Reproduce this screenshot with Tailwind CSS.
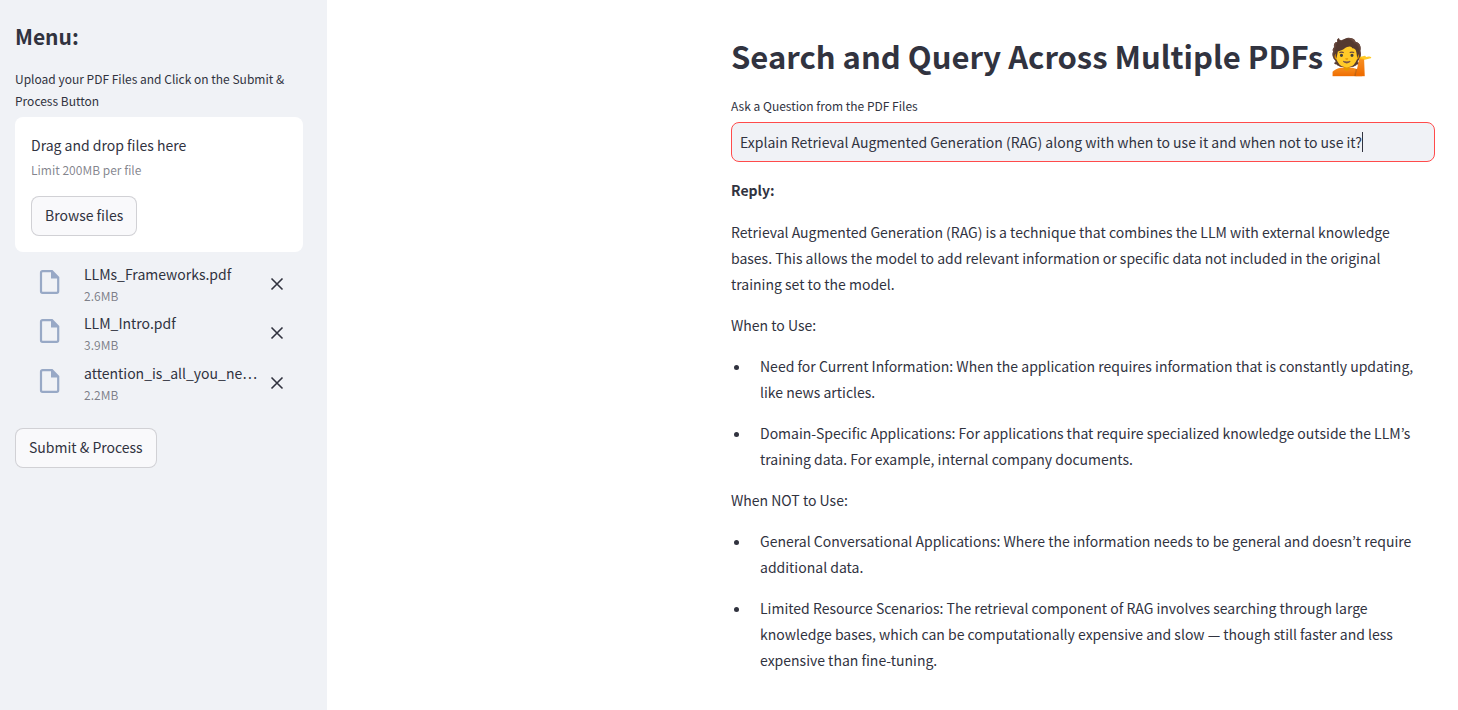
<!DOCTYPE html>
<html lang="en">
<head>
<meta charset="utf-8">
<meta name="viewport" content="width=device-width, initial-scale=1">
<title>Search and Query Across Multiple PDFs</title>
<script src="https://cdn.jsdelivr.net/npm/@tailwindcss/browser@4"></script>
</head>
<body class="flex min-h-screen bg-white font-['Noto_Sans_CJK_KR',sans-serif] text-[14px] leading-[26px] text-[#31333f]">

<aside class="w-[327px] shrink-0 bg-[#f0f2f6] pt-[21px] pr-6 pb-6 pl-[15px]">
  <h2 class="text-[21px] leading-[30px] font-bold">Menu:</h2>
  <label for="files" class="mt-[17px] block text-[12px] leading-[22px]">Upload your PDF Files and Click on the Submit &amp; Process Button</label>
  <section class="mt-[5px] rounded-lg bg-white px-4 pt-[15px] pb-4">
    <p class="leading-[26px]">Drag and drop files here</p>
    <p class="text-[12px] leading-6 text-[#31333f]/60">Limit 200MB per file</p>
    <button id="files" type="button" class="mt-[14px] h-10 rounded-lg border border-[#31333f]/20 bg-[#f9f9fb] px-[13px] pb-[2px]">Browse files</button>
  </section>
  <ul class="mt-[9px] flex flex-col">
    <li class="flex h-[49px] pr-4 pl-[23px]">
      <svg class="mt-2 h-[26px] w-6 shrink-0" viewBox="0 0 24 26" aria-hidden="true"><path d="M4.500 2.200H14L20.200 8.500V22.300a1.500 1.500 0 0 1-1.500 1.500H4.500A1.500 1.500 0 0 1 3 22.300V3.700A1.500 1.500 0 0 1 4.500 2.200Z" fill="none" stroke="#98a9c6" stroke-width="2.200"/><path d="M13 1.500V9.500H21Z" fill="#98a9c6"/></svg>
      <div class="ml-[22px] min-w-0 flex-1"><p class="truncate leading-[26px]">LLMs_Frameworks.pdf</p><p class="text-[12px] leading-[18px] text-[#31333f]/60">2.6MB</p></div>
      <button type="button" aria-label="Remove LLMs_Frameworks.pdf" class="mt-[15px] ml-2 h-4 w-5"><svg class="h-4 w-5" viewBox="0 0 20 16"><path d="M4.500 2.500l11 11M15.500 2.500l-11 11" stroke="#31333f" stroke-width="1.600"/></svg></button>
    </li>
    <li class="flex h-[50px] pr-4 pl-[23px]">
      <svg class="mt-2 h-[26px] w-6 shrink-0" viewBox="0 0 24 26" aria-hidden="true"><path d="M4.500 2.200H14L20.200 8.500V22.300a1.500 1.500 0 0 1-1.500 1.500H4.500A1.500 1.500 0 0 1 3 22.300V3.700A1.500 1.500 0 0 1 4.500 2.200Z" fill="none" stroke="#98a9c6" stroke-width="2.200"/><path d="M13 1.500V9.500H21Z" fill="#98a9c6"/></svg>
      <div class="ml-[22px] min-w-0 flex-1"><p class="truncate leading-[26px]">LLM_Intro.pdf</p><p class="text-[12px] leading-[18px] text-[#31333f]/60">3.9MB</p></div>
      <button type="button" aria-label="Remove LLM_Intro.pdf" class="mt-[15px] ml-2 h-4 w-5"><svg class="h-4 w-5" viewBox="0 0 20 16"><path d="M4.500 2.500l11 11M15.500 2.500l-11 11" stroke="#31333f" stroke-width="1.600"/></svg></button>
    </li>
    <li class="flex h-[50px] pr-4 pl-[23px]">
      <svg class="mt-2 h-[26px] w-6 shrink-0" viewBox="0 0 24 26" aria-hidden="true"><path d="M4.500 2.200H14L20.200 8.500V22.300a1.500 1.500 0 0 1-1.500 1.500H4.500A1.500 1.500 0 0 1 3 22.300V3.700A1.500 1.500 0 0 1 4.500 2.200Z" fill="none" stroke="#98a9c6" stroke-width="2.200"/><path d="M13 1.500V9.500H21Z" fill="#98a9c6"/></svg>
      <div class="ml-[22px] min-w-0 flex-1"><p class="leading-[26px]">attention_is_all_you_ne…</p><p class="text-[12px] leading-[18px] text-[#31333f]/60">2.2MB</p></div>
      <button type="button" aria-label="Remove attention_is_all_you_ne…" class="mt-[15px] ml-2 h-4 w-5"><svg class="h-4 w-5" viewBox="0 0 20 16"><path d="M4.500 2.500l11 11M15.500 2.500l-11 11" stroke="#31333f" stroke-width="1.600"/></svg></button>
    </li>
  </ul>
  <button type="button" class="mt-[18px] h-10 rounded-lg border border-[#31333f]/20 bg-[#f9f9fb] px-[13px] pb-[2px]">Submit &amp; Process</button>
</aside>

<main class="flex min-w-0 flex-1 justify-end pt-[31px] pr-[23px] pb-8 pl-6">
  <div class="w-full max-w-[704px]">
    <h1 class="h-[50px] text-[31px] leading-[50px] font-bold whitespace-nowrap">Search and Query Across Multiple PDFs <span class="font-['Noto_Color_Emoji'] text-[35px] font-normal">💁</span></h1>
    <label for="question" class="mt-[14px] block text-[12px] leading-[22px]">Ask a Question from the PDF Files</label>
    <div class="relative mt-[5px]">
      <input id="question" type="text" value="Explain Retrieval Augmented Generation (RAG) along with when to use it and when not to use it?" class="block h-10 w-full rounded-lg border border-[#ff4b4b] bg-[#f0f2f6] px-2 outline-none">
      <span class="absolute top-[10px] left-[631px] h-5 w-px bg-[#31333f]" aria-hidden="true"></span>
    </div>
    <p class="mt-[15px] font-bold">Reply:</p>
    <div class="mt-4 flex flex-col gap-[15px]">
      <p class="pr-4">Retrieval Augmented Generation (RAG) is a technique that combines the LLM with external knowledge bases. This allows the model to add relevant information or specific data not included in the original training set to the model.</p>
      <p>When to Use:</p>
      <ul class="flex list-disc flex-col gap-[15px] pl-5">
        <li class="pl-[9px]">Need for Current Information: When the application requires information that is constantly updating, like news articles.</li>
        <li class="pl-[9px]">Domain-Specific Applications: For applications that require specialized knowledge outside the LLM’s training data. For example, internal company documents.</li>
      </ul>
      <p>When NOT to Use:</p>
      <ul class="flex list-disc flex-col gap-[15px] pl-5">
        <li class="pl-[9px]">General Conversational Applications: Where the information needs to be general and doesn’t require additional data.</li>
        <li class="pl-[9px]">Limited Resource Scenarios: The retrieval component of RAG involves searching through large knowledge bases, which can be computationally expensive and slow — though still faster and less expensive than fine-tuning.</li>
      </ul>
    </div>
  </div>
</main>
</body>
</html>
